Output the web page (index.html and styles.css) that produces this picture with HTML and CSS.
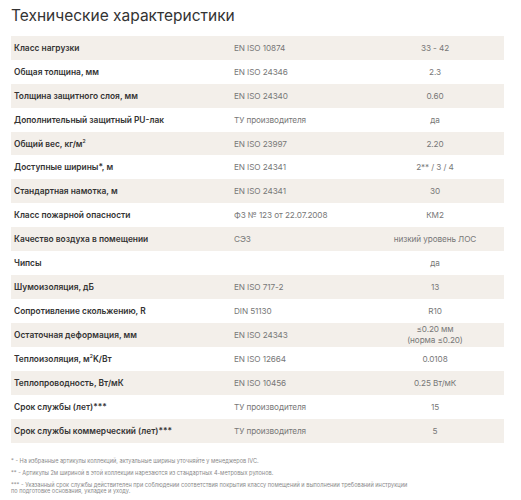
FILE: index.html
```html
<!DOCTYPE html>
<html lang="ru">
<head>
<meta charset="utf-8">
<title>Технические характеристики</title>
<link rel="stylesheet" href="styles.css">
</head>
<body>
<div class="page">
  <h2 class="title">Технические характеристики</h2>
  <div class="specs">
    <div class="row alt"><div class="name">Класс нагрузки</div><div class="std">EN ISO 10874</div><div class="val">33 - 42</div></div>
    <div class="row"><div class="name">Общая толщина, мм</div><div class="std">EN ISO 24346</div><div class="val">2.3</div></div>
    <div class="row alt"><div class="name">Толщина защитного слоя, мм</div><div class="std">EN ISO 24340</div><div class="val">0.60</div></div>
    <div class="row"><div class="name">Дополнительный защитный PU-лак</div><div class="std">ТУ производителя</div><div class="val">да</div></div>
    <div class="row alt"><div class="name">Общий вес, кг/м<sup>2</sup></div><div class="std">EN ISO 23997</div><div class="val">2.20</div></div>
    <div class="row"><div class="name">Доступные ширины*, м</div><div class="std">EN ISO 24341</div><div class="val">2** / 3 / 4</div></div>
    <div class="row alt"><div class="name">Стандартная намотка, м</div><div class="std">EN ISO 24341</div><div class="val">30</div></div>
    <div class="row"><div class="name">Класс пожарной опасности</div><div class="std">ФЗ № 123 от 22.07.2008</div><div class="val">КМ2</div></div>
    <div class="row alt"><div class="name">Качество воздуха в помещении</div><div class="std">СЭЗ</div><div class="val">низкий уровень ЛОС</div></div>
    <div class="row"><div class="name">Чипсы</div><div class="std"></div><div class="val">да</div></div>
    <div class="row alt"><div class="name">Шумоизоляция, дБ</div><div class="std">EN ISO 717-2</div><div class="val">13</div></div>
    <div class="row"><div class="name">Сопротивление скольжению, R</div><div class="std">DIN 51130</div><div class="val">R10</div></div>
    <div class="row alt tall"><div class="name">Остаточная деформация, мм</div><div class="std">EN ISO 24343</div><div class="val">≤0.20 мм<br>(норма ≤0.20)</div></div>
    <div class="row"><div class="name">Теплоизоляция, м<sup>2</sup>K/Вт</div><div class="std">EN ISO 12664</div><div class="val">0.0108</div></div>
    <div class="row alt"><div class="name">Теплопроводность, Вт/мК</div><div class="std">EN ISO 10456</div><div class="val">0.25 Вт/мК</div></div>
    <div class="row"><div class="name">Срок службы (лет)***</div><div class="std">ТУ производителя</div><div class="val">15</div></div>
    <div class="row alt"><div class="name">Срок службы коммерческий (лет)***</div><div class="std">ТУ производителя</div><div class="val">5</div></div>
  </div>
  <div class="notes">
    <p>* - На избранные артикулы коллекций, актуальные ширины уточняйте у менеджеров IVC.</p>
    <p>** - Артикулы 2м шириной в этой коллекции нарезаются из стандартных 4-метровых рулонов.</p>
    <p>*** - Указанный срок службы действителен при соблюдении соответствия покрытия классу помещений и выполнении требований инструкции<br>по подготовке основания, укладке и уходу.</p>
  </div>
</div>
</body>
</html>
```

FILE: styles.css
```css
html, body {
  margin: 0;
  padding: 0;
  background: #ffffff;
}

.page {
  padding: 0 17px 0 11px;
  font-family: Inter, "Noto Sans", sans-serif;
  color: #333333;
}

.title {
  margin: 0;
  padding-top: 6px;
  height: 36px;
  box-sizing: border-box;
  font-size: 15.5px;
  font-weight: 400;
  line-height: 19px;
  color: #333333;
}

.specs {
  display: flex;
  flex-direction: column;
}

.row {
  display: grid;
  grid-template-columns: 220px 135px 138px;
  align-items: center;
  height: 23.9px;
}

.row.alt {
  background: #f3efea;
}

.row.tall {
  height: 24.6px;
}

.name {
  padding-left: 3px;
  font-size: 8.4px;
  font-weight: 600;
  color: #333333;
}

.name sup {
  font-size: 5px;
  line-height: 0;
}

.std {
  padding-left: 3px;
  font-size: 8.2px;
  font-weight: 400;
  letter-spacing: -0.1px;
  color: #777777;
}

.val {
  text-align: center;
  font-size: 8.2px;
  font-weight: 400;
  letter-spacing: -0.1px;
  color: #777777;
}

.tall .val {
  line-height: 10.7px;
}

.notes {
  padding-top: 16px;
}

.notes p {
  margin: 0 0 7px;
  font-size: 5.6px;
  line-height: 5.3px;
  color: #8a8a8a;
}
```
